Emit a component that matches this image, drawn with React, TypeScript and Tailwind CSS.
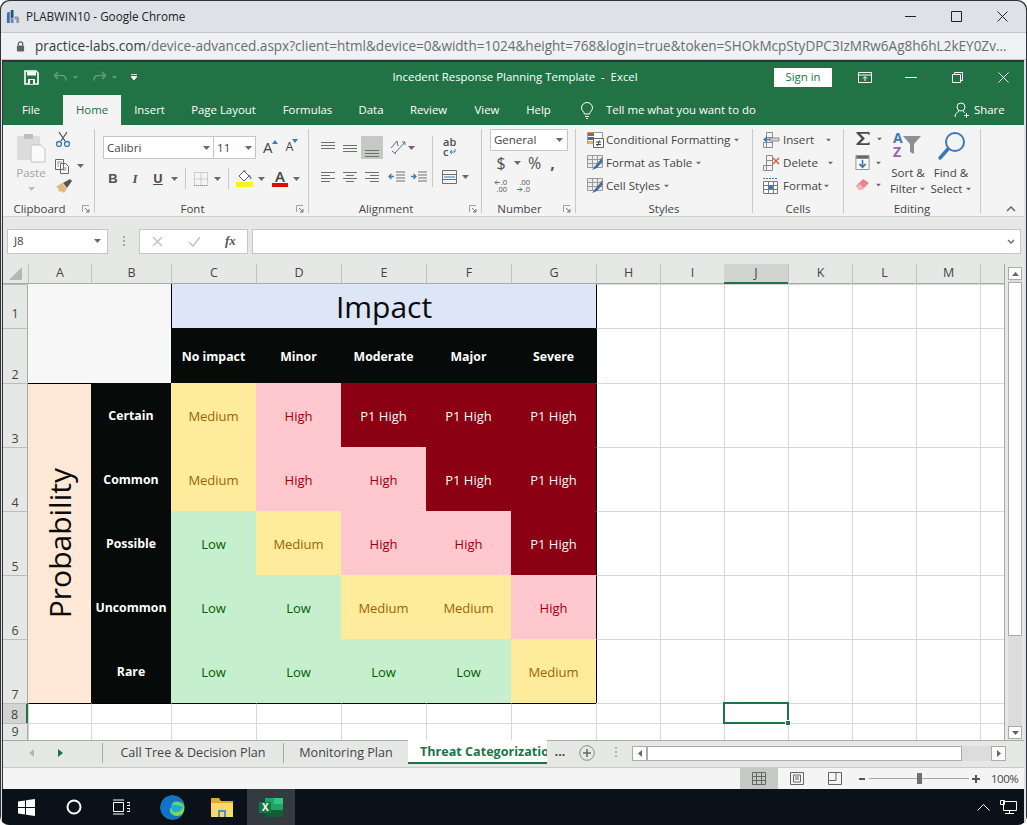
import type { ReactNode } from 'react';

const Caret = ({ className = '' }: { className?: string }) => (
  <svg width="7" height="4" viewBox="0 0 7 4" className={`shrink-0 ${className}`}>
    <path d="M0 0h7L3.5 4z" fill="#6a6a6a" />
  </svg>
);

const Lines = ({ rows, color = '#6f6f6f' }: { rows: number[][]; color?: string }) => (
  <svg width="16" height="14" viewBox="0 0 16 14" className="shrink-0">
    {rows.map(([a, b, y], i) => (
      <path key={i} d={`M${a} ${y + 0.5}H${b}`} stroke={color} />
    ))}
  </svg>
);

function Launcher() {
  return (
    <svg width="8" height="8" viewBox="0 0 8 8" className="absolute right-[4px] top-[4px]">
      <path d="M.5 7V.5H7" fill="none" stroke="#a0a0a0" />
      <path d="M3 3l4 4M7 4v3H4" fill="none" stroke="#707070" />
    </svg>
  );
}

function Group({
  label,
  launcher,
  className,
  children,
}: {
  label: string;
  launcher?: boolean;
  className: string;
  children: ReactNode;
}) {
  return (
    <div className={`flex h-[84px] flex-col border-r border-[#c9c9c9] ${className}`}>
      <div className="h-[72px] shrink-0">{children}</div>
      <div className={`relative flex h-[16px] shrink-0 items-center justify-center text-[11.5px] text-[#444] ${launcher ? 'pr-[18px]' : ''}`}>
        {label}
        {launcher && <Launcher />}
      </div>
    </div>
  );
}

function ChromeBar() {
  return (
    <>
      <div className="flex h-[31px] items-center rounded-t-[9px] bg-[#dee1e6] pl-[5px] pr-[18px] text-[11.7px] text-[#222]">
        <svg width="15" height="15" viewBox="0 0 16 16" className="shrink-0">
          <path d="M1 4l3-1v12H1z" fill="#3f6da8" />
          <path d="M5 1l3 0v8l-3 1z" fill="#24507f" />
          <path d="M9 8h4l1 2v5h-3v-4H9z" fill="#8b9ab0" />
          <path d="M5 10h3v5H5z" fill="#5d87bd" />
        </svg>
        <span className="ml-[5px]">PLABWIN10 - Google Chrome</span>
        <div className="ml-auto flex items-center gap-[35px]">
          <svg width="11" height="11" viewBox="0 0 11 11"><path d="M0 5.500h11" stroke="#222" /></svg>
          <svg width="11" height="11" viewBox="0 0 11 11"><path d="M.5.500h10v10H.5z" fill="none" stroke="#222" /></svg>
          <svg width="11" height="11" viewBox="0 0 11 11"><path d="M.5.500l10 10M10.500.500l-10 10" stroke="#222" /></svg>
        </div>
      </div>
      <div className="flex h-[28px] items-center border-y border-[#c4c6ca] bg-[#eff1f4] pl-[15px] text-[13.55px] whitespace-nowrap text-[#6a6d72]">
        <svg width="9" height="11" viewBox="0 0 10 12" className="shrink-0">
          <path d="M2.500 5V3.400a2.500 2.500 0 015 0V5" fill="none" stroke="#5f6368" strokeWidth="1.400" />
          <rect x="1" y="5" width="8" height="6.500" rx="1" fill="#5f6368" />
        </svg>
        <span className="ml-[10px]">
          <span className="text-[#3b3c3e]">practice-labs.com</span>
          /device-advanced.aspx?client=html&device=0&width=1024&height=768&login=true&token=SHOkMcpStyDPC3IzMRw6Ag8h6hL2kEY0Zv...
        </span>
      </div>
    </>
  );
}

const tabs = [
  { name: 'File', w: 'w-[56px] mr-[4px]' },
  { name: 'Home', w: 'w-[58px] h-[30px] bg-[#f4f4f4] text-[#1f6b41]' },
  { name: 'Insert', w: 'w-[57px]' },
  { name: 'Page Layout', w: 'w-[91px]' },
  { name: 'Formulas', w: 'w-[77px]' },
  { name: 'Data', w: 'w-[50px]' },
  { name: 'Review', w: 'w-[65px]' },
  { name: 'View', w: 'w-[52px]' },
  { name: 'Help', w: 'w-[51px]' },
];

function ExcelHeader() {
  return (
    <div className="h-[63px] bg-[#217346] text-[11.4px] text-white">
      <div className="flex h-[30px] items-center">
        <svg width="15" height="15" viewBox="0 0 15 15" className="ml-[21px] shrink-0">
          <path d="M1 1h11l2 2v11H1z" fill="none" stroke="#fff" strokeWidth="1.600" />
          <path d="M3 1.500h9v4H3zM4 9h7v5H4z" fill="#fff" />
          <path d="M6 10h3v4H6z" fill="#217346" />
        </svg>
        <svg width="15" height="13" viewBox="0 0 15 13" className="ml-[14px] shrink-0">
          <path d="M5 1L1.500 4.500 5 8M2 4.500h7a4 4 0 014 4v1" fill="none" stroke="#5f9c7b" strokeWidth="1.600" />
        </svg>
        <svg width="5" height="3" viewBox="0 0 5 3" className="ml-[5px]"><path d="M0 0h5L2.500 3z" fill="#5f9c7b" /></svg>
        <svg width="15" height="13" viewBox="0 0 15 13" className="ml-[14px] shrink-0">
          <path d="M10 1l3.500 3.500L10 8M13 4.500H6a4 4 0 00-4 4v1" fill="none" stroke="#5f9c7b" strokeWidth="1.600" />
        </svg>
        <svg width="5" height="3" viewBox="0 0 5 3" className="ml-[5px]"><path d="M0 0h5L2.500 3z" fill="#5f9c7b" /></svg>
        <svg width="6" height="6" viewBox="0 0 6 6" className="ml-[14px]"><path d="M0 .5h6M0 2.500h6L3 6z" stroke="#fff" strokeWidth=".8" fill="#fff" /></svg>
        <div className="ml-[254px] w-[248px] text-center text-[11.4px] whitespace-pre">Incedent Response Planning Template  -  Excel</div>
        <div className="ml-[135px] flex h-[19px] w-[58px] items-center justify-center bg-white text-[#217346]">Sign in</div>
        <svg width="14" height="11" viewBox="0 0 14 11" className="ml-[26px]">
          <path d="M.5.500h13v10H.5zM.5 3h13M7 9V5M5 6.500l2-2 2 2" fill="none" stroke="#fff" />
        </svg>
        <svg width="12" height="1" viewBox="0 0 12 1" className="ml-[33px]"><path d="M0 .5h12" stroke="#fff" /></svg>
        <svg width="11" height="11" viewBox="0 0 11 11" className="ml-[35px]">
          <path d="M.5 2.500h8v8h-8zM2.500 2.500v-2h8v8h-2" fill="none" stroke="#fff" />
        </svg>
        <svg width="11" height="11" viewBox="0 0 11 11" className="ml-[35px]">
          <path d="M.5.500l10 10M10.500.500l-10 10" stroke="#fff" />
        </svg>
      </div>
      <div className="flex h-[33px] items-end">
        {tabs.map((t) => (
          <div key={t.name} className={`flex h-[30px] shrink-0 items-center justify-center ${t.w}`}>
            {t.name}
          </div>
        ))}
        <div className="flex h-[30px] items-center">
          <svg width="14" height="17" viewBox="0 0 14 17" className="ml-[16px]">
            <path d="M4.500 12C4 9.500 1.500 8.500 1.500 6a5.500 5.500 0 0111 0c0 2.500-2.500 3.500-3 6zM5 14.500h4M6 16.500h2" fill="none" stroke="#fff" />
          </svg>
          <span className="ml-[12px] w-[152px] whitespace-nowrap">Tell me what you want to do</span>
          <svg width="15" height="16" viewBox="0 0 15 16" className="ml-[196px]">
            <circle cx="7" cy="5" r="4" fill="none" stroke="#fff" />
            <path d="M1 15c0-3 2-5 4-5.500M9 9.500c1 .3 1.500.7 2 1.300M10 13.500h5M12.500 11v5" fill="none" stroke="#fff" />
          </svg>
          <span className="ml-[5px]">Share</span>
        </div>
      </div>
    </div>
  );
}

function ClipboardGroup() {
  return (
    <Group label="Clipboard" launcher className="w-[92px]">
      <div className="flex">
        <div className="flex w-[50px] flex-col items-center pl-[6px] pt-[3px] text-[11.5px] text-[#a3a3a3]">
          <svg width="30" height="31" viewBox="0 0 30 31">
            <path d="M1 4h23v24H1z" fill="#dcdcdc" />
            <path d="M8 2h9v5H8z" fill="#bdbdbd" />
            <path d="M15 13h10l4 4v13H15z" fill="#fafafa" stroke="#c4c4c4" />
          </svg>
          <span className="mt-[2px] leading-[16px]">Paste</span>
          <Caret className="mt-[6px] opacity-40" />
        </div>
        <div className="flex flex-col pl-[2px] pt-[2px]">
          <div className="h-[24px]">
            <svg width="16" height="16" viewBox="0 0 16 16">
              <path d="M4 1l6 9M12 1L6 10" stroke="#555" strokeWidth="1.300" />
              <circle cx="4" cy="13" r="2.500" fill="none" stroke="#3e75ad" strokeWidth="1.300" />
              <circle cx="12" cy="13" r="2.500" fill="none" stroke="#3e75ad" strokeWidth="1.300" />
            </svg>
          </div>
          <div className="flex h-[22px] items-center gap-[6px]">
            <svg width="16" height="15" viewBox="0 0 16 15">
              <path d="M.5.500h8v10h-8zM5.500 4.500h5l3 3v7h-8z" fill="#fff" stroke="#666" />
              <path d="M2 3h5M2 5h2M2 7h2M7.500 9h4M7.500 11h4" stroke="#888" />
            </svg>
            <Caret />
          </div>
          <svg width="18" height="16" viewBox="0 0 18 16" className="mt-[1px]">
            <path d="M1 9l6-4 5 6-3 4-3-2-1 1-2-2 1-1z" fill="#e3b778" />
            <path d="M8 5l7-4 2 2-5 7z" fill="#555" />
          </svg>
        </div>
      </div>
    </Group>
  );
}

function FontGroup() {
  return (
    <Group label="Font" launcher className="w-[214px]">
      <div className="pl-[8px] pt-[7px] text-[11.6px] text-[#444]">
        <div className="flex h-[23px] items-center">
          <div className="flex h-[23px] w-[111px] items-center justify-between border border-[#c6c6c6] bg-white pl-[3px] pr-[3px]">
            Calibri <Caret />
          </div>
          <div className="-ml-px flex h-[23px] w-[43px] items-center justify-between border border-[#c6c6c6] bg-white pl-[3px] pr-[3px]">
            11 <Caret />
          </div>
          <span className="relative ml-[7px] text-[15px] leading-none">
            A
            <svg width="6" height="4" viewBox="0 0 6 4" className="absolute -right-[5px] top-0"><path d="M0 4h6L3 0z" fill="#3f79b4" /></svg>
          </span>
          <span className="relative ml-[13px] text-[12.5px] leading-none">
            A
            <svg width="6" height="4" viewBox="0 0 6 4" className="absolute -right-[5px] -top-[2px]"><path d="M0 0h6L3 4z" fill="#3f79b4" /></svg>
          </span>
        </div>
        <div className="mt-[11px] flex h-[17px] items-center text-[13px] text-[#505050]">
          <b className="w-[20px] text-center font-['Liberation_Sans',sans-serif] font-bold">B</b>
          <i className="w-[24px] text-center font-['Liberation_Serif',serif] font-bold">I</i>
          <u className="w-[22px] text-center font-bold">U</u>
          <Caret className="ml-[2px]" />
          <div className="ml-[7px] h-[21px] w-px bg-[#c9c9c9]" />
          <svg width="14" height="14" viewBox="0 0 14 14" className="ml-[8px]">
            <path d="M.5.500h13v13H.5zM7 .5v13M.5 7h13" fill="none" stroke="#a8a8a8" strokeDasharray="1 1" />
            <path d="M0 13.500h14" stroke="#8a8a8a" strokeDasharray="1 1" />
          </svg>
          <Caret className="ml-[6px]" />
          <div className="ml-[7px] h-[21px] w-px bg-[#c9c9c9]" />
          <svg width="17" height="17" viewBox="0 0 17 17" className="ml-[7px]">
            <path d="M8 1l5 5-5 5-5-5z" fill="#fff" stroke="#5c5c5c" />
            <path d="M7 1h3M13 5c1 2 2 3 2 4" fill="none" stroke="#3f79b4" strokeWidth="1.200" />
            <path d="M0 12h17v5H0z" fill="#f7f31c" />
          </svg>
          <Caret className="ml-[5px]" />
          <div className="ml-[7px] flex w-[16px] flex-col items-center">
            <span className="h-[13px] text-[15px] leading-[13px] font-semibold text-[#444]">A</span>
            <div className="h-[4px] w-[16px] bg-[#de0a0a]" />
          </div>
          <Caret className="ml-[5px]" />
        </div>
      </div>
    </Group>
  );
}

const alignRows = {
  top: [[1, 15, 1], [1, 15, 4], [1, 15, 7]],
  mid: [[1, 15, 4], [1, 15, 7], [1, 15, 10]],
  bot: [[1, 15, 7], [1, 15, 10], [1, 15, 13]],
  left: [[1, 15, 2], [1, 10, 5], [1, 15, 8], [1, 10, 11]],
  center: [[1, 15, 2], [4, 12, 5], [1, 15, 8], [4, 12, 11]],
  right: [[1, 15, 2], [6, 15, 5], [1, 15, 8], [6, 15, 11]],
};

function AlignmentGroup() {
  return (
    <Group label="Alignment" launcher className="w-[173px]">
      <div className="flex pl-[11px] pt-[7px]">
        <div className="flex w-[113px] flex-col border-r border-[#c9c9c9] pb-[2px]">
          <div className="flex h-[23px] items-center">
            <Lines rows={alignRows.top} />
            <div className="ml-[6px]"><Lines rows={alignRows.mid} /></div>
            <div className="ml-[3px] flex h-[23px] w-[22px] items-end justify-center bg-[#c6c8c6] pb-[2px]">
              <Lines rows={alignRows.bot} />
            </div>
            <svg width="17" height="17" viewBox="0 0 17 17" className="ml-[6px]">
              <path d="M2 9l6-7 1 5M3 12l4 3" fill="none" stroke="#666" />
              <path d="M6 14L16 3M13 3h3v3" fill="none" stroke="#3f79b4" />
            </svg>
            <Caret className="ml-[2px]" />
          </div>
          <div className="mt-[10px] flex h-[16px] items-center">
            <Lines rows={alignRows.left} />
            <div className="ml-[6px]"><Lines rows={alignRows.center} /></div>
            <div className="ml-[6px]"><Lines rows={alignRows.right} /></div>
            <svg width="17" height="14" viewBox="0 0 17 14" className="ml-[8px]">
              <path d="M8 2h9M8 5h9M8 8h9M8 11h9" stroke="#6f6f6f" />
              <path d="M6 6.500H1M3.500 4L1 6.500 3.500 9" fill="none" stroke="#3f79b4" strokeWidth="1.300" />
            </svg>
            <svg width="17" height="14" viewBox="0 0 17 14" className="ml-[5px]">
              <path d="M8 2h9M8 5h9M8 8h9M8 11h9" stroke="#6f6f6f" />
              <path d="M1 6.500h5M3.500 4L6 6.500 3.500 9" fill="none" stroke="#3f79b4" strokeWidth="1.300" />
            </svg>
          </div>
        </div>
        <div className="flex flex-col pl-[9px]">
          <div className="flex h-[23px] flex-col items-start pl-[1px] pt-[1px] text-[11px] font-semibold text-[#505050]">
            <span className="h-[10px] leading-[10px]">ab</span>
            <span className="flex h-[10px] items-center leading-[10px]">
              c
              <svg width="7" height="6" viewBox="0 0 7 6" className="ml-px">
                <path d="M6 0v3H1M3 1L1 3l2 2" fill="none" stroke="#3f79b4" />
              </svg>
            </span>
          </div>
          <div className="mt-[10px] flex h-[16px] items-center">
            <svg width="15" height="14" viewBox="0 0 15 14">
              <path d="M.5.500h14v13H.5zM.5 4.500h14M.5 9.500h14" fill="none" stroke="#6f6f6f" />
              <path d="M2 7h11" stroke="#3f79b4" />
            </svg>
            <Caret className="ml-[5px]" />
          </div>
        </div>
      </div>
    </Group>
  );
}

const ArrowLeft = () => (
  <svg width="6" height="5" viewBox="0 0 6 5" className="mr-px">
    <path d="M6 2.500H1M3 .5l-2 2 2 2" fill="none" stroke="#3f79b4" />
  </svg>
);

const ArrowRight = () => (
  <svg width="6" height="5" viewBox="0 0 6 5" className="mr-px">
    <path d="M0 2.500h5M3 .5l2 2-2 2" fill="none" stroke="#3f79b4" />
  </svg>
);

function NumberGroup() {
  return (
    <Group label="Number" launcher className="w-[94px]">
      <div className="pl-[8px] text-[#505050]">
        <div className="flex h-[22px] w-[78px] items-center justify-between border border-[#c6c6c6] bg-white pl-[3px] pr-[4px] text-[11.5px] text-[#444]">
          General <Caret />
        </div>
        <div className="mt-[2px] flex h-[20px] items-center text-[16px]">
          <span className="ml-[6px] w-[10px] text-center">$</span>
          <Caret className="ml-[8px]" />
          <span className="ml-[7px]">%</span>
          <span className="ml-[9px] font-bold">,</span>
        </div>
        <div className="mt-[5px] flex h-[15px] items-center text-[7.500px]">
          <div className="ml-[3px] flex w-[14px] flex-col items-end">
            <span className="flex h-[7px] items-center leading-[7px]"><ArrowLeft />.0</span>
            <span className="h-[7px] leading-[7px]">.00</span>
          </div>
          <div className="ml-[9px] flex w-[14px] flex-col items-end">
            <span className="h-[7px] leading-[7px]">.00</span>
            <span className="flex h-[7px] items-center leading-[7px]"><ArrowRight />.0</span>
          </div>
        </div>
      </div>
    </Group>
  );
}

const TableIcon = () => (
  <svg width="17" height="16" viewBox="0 0 17 16" className="shrink-0">
    <path d="M.5.500h15v12H.5zM.5 4.500h15M.5 8.500h15M5.500.5v12M10.500.5v12" fill="#ececec" stroke="#9a9a9a" />
    <path d="M5 15l3-4 6-7 2 2-6 7z" fill="#3f6da8" />
    <path d="M16 2l-3 2 2 2z" fill="#7a7a7a" />
  </svg>
);

function StylesGroup() {
  return (
    <Group label="Styles" className="w-[177px]">
      <div className="flex flex-col gap-[7px] pl-[11px] pt-[3px] text-[11.6px] leading-[16px] text-[#444]">
        <div className="flex items-center">
          <svg width="17" height="16" viewBox="0 0 17 16" className="shrink-0">
            <path d="M.5.500h15v11H.5z" fill="#fff" stroke="#9a9a9a" />
            <path d="M1 1h6v3H1z" fill="#b15a3c" />
            <path d="M1 5h6v3H1z" fill="#3f6da8" />
            <path d="M1 9h6v3H1z" fill="#e6b25a" />
            <path d="M6.500 6.500h10v9h-10z" fill="#fff" stroke="#666" />
            <path d="M9 10h5M9 12.500h5M12.500 8.500l-2 5.500" stroke="#444" />
          </svg>
          <span className="ml-[2px] whitespace-nowrap">Conditional Formatting</span>
          <Caret className="ml-[3px] scale-75" />
        </div>
        <div className="flex items-center">
          <TableIcon />
          <span className="ml-[2px] whitespace-nowrap">Format as Table</span>
          <Caret className="ml-[3px] scale-75" />
        </div>
        <div className="flex items-center">
          <TableIcon />
          <span className="ml-[2px] whitespace-nowrap">Cell Styles</span>
          <Caret className="ml-[3px] scale-75" />
        </div>
      </div>
    </Group>
  );
}

function CellsGroup() {
  const cellRow = (name: string, icon: ReactNode, caret: string) => (
    <div className="flex items-center">
      {icon}
      <span className="ml-[3px]">{name}</span>
      <Caret className={`scale-75 ${caret}`} />
    </div>
  );
  return (
    <Group label="Cells" className="w-[91px]">
      <div className="flex flex-col gap-[7px] pl-[10px] pt-[3px] text-[11.6px] leading-[16px] text-[#444]">
        {cellRow(
          'Insert',
          <svg width="17" height="16" viewBox="0 0 17 16" className="shrink-0">
            <path d="M3.500.500h6v15h-6zM.5 10.500h9M.5 10.500v5h3M3.500 5.500h6" fill="none" stroke="#8a8a8a" />
            <path d="M7 6h9v3H7z" fill="#d8d8d8" stroke="#8a8a8a" />
            <path d="M1 7.500h6M4 5L1 7.500 4 10" fill="none" stroke="#3f79b4" strokeWidth="1.400" />
          </svg>,
          'ml-[11px]',
        )}
        {cellRow(
          'Delete',
          <svg width="17" height="16" viewBox="0 0 17 16" className="shrink-0">
            <path d="M3.500.500h6v15h-6zM.5 10.500h9M.5 10.500v5h3M3.500 5.500h6" fill="none" stroke="#8a8a8a" />
            <path d="M10 3l6 6M16 3l-6 6" stroke="#d9603c" strokeWidth="1.500" />
          </svg>,
          'ml-[9px]',
        )}
        {cellRow(
          'Format',
          <svg width="17" height="16" viewBox="0 0 17 16" className="shrink-0">
            <path d="M.5 3.500h14v12H.5zM.5 7.500h14M.5 11.500h14M5.500 3.500v12M10.500 3.500v12" fill="#fff" stroke="#7a7a7a" />
            <path d="M5 7h5v4H5z" fill="#3f79b4" />
            <path d="M0 .5h15" stroke="#3f79b4" strokeDasharray="2 1" />
          </svg>,
          'ml-[1px]',
        )}
      </div>
    </Group>
  );
}

function EditingGroup() {
  return (
    <Group label="Editing" className="w-[137px]">
      <div className="flex pl-[11px] text-[11.6px] leading-[16px] text-[#444]">
        <div className="flex w-[35px] flex-col pt-[2px]">
          <div className="flex h-[15px] items-center gap-[5px]">
            <svg width="16" height="15" viewBox="0 0 16 16">
              <path d="M1 1h14v3.500L13 3H5l5 5-5 5h8l2-1.500V15H1v-1.500L6.500 8 1 2.500z" fill="#4a4a4a" />
            </svg>
            <Caret className="scale-75" />
          </div>
          <div className="mt-[9px] flex h-[15px] items-center gap-[5px]">
            <svg width="15" height="15" viewBox="0 0 15 16">
              <path d="M.5.500h14v15H.5z" fill="#fff" stroke="#8a8a8a" />
              <path d="M1 1h13v3H1z" fill="#666" />
              <path d="M7.500 5v8M4 9.500l3.500 3.500L11 9.500" fill="none" stroke="#3f79b4" strokeWidth="1.800" />
            </svg>
            <Caret className="scale-75" />
          </div>
          <div className="mt-[8px] flex h-[13px] items-center gap-[5px]">
            <svg width="15" height="13" viewBox="0 0 15 13">
              <path d="M1 8l7-7 6 4-7 7H4z" fill="#ef7f8a" />
              <path d="M1 8l3 4h3l2-2-4-4z" fill="#f3b4ba" />
            </svg>
            <Caret className="scale-75" />
          </div>
        </div>
        <div className="flex w-[36px] flex-col items-center pt-[2px]">
          <div className="flex h-[32px] w-[30px] items-start">
            <div className="flex flex-col text-[14px] leading-[14px] font-bold">
              <span className="text-[#3f79b4]">A</span>
              <span className="text-[#9a62b5]">Z</span>
            </div>
            <svg width="18" height="20" viewBox="0 0 18 20" className="mt-[5px]">
              <path d="M0 0h18l-7 8v10l-4-2V8z" fill="#8a8f96" />
            </svg>
          </div>
          <span className="mt-[2px] whitespace-nowrap">Sort &amp;</span>
          <div className="flex items-center whitespace-nowrap">Filter<Caret className="ml-[2px] scale-75" /></div>
        </div>
        <div className="flex w-[50px] flex-col items-center pt-[2px]">
          <svg width="28" height="32" viewBox="0 0 28 32">
            <circle cx="18" cy="11" r="9" fill="none" stroke="#3f79b4" strokeWidth="2" />
            <path d="M11 18L3 27" stroke="#3f79b4" strokeWidth="3.500" strokeLinecap="round" />
          </svg>
          <span className="mt-[2px] whitespace-nowrap">Find &amp;</span>
          <div className="flex items-center whitespace-nowrap">Select<Caret className="ml-[2px] scale-75" /></div>
        </div>
      </div>
    </Group>
  );
}

function Ribbon() {
  return (
    <div className="flex h-[92px] items-start border-b border-[#d0d0d0] bg-[#f4f4f4] pt-[4px]">
      <ClipboardGroup />
      <FontGroup />
      <AlignmentGroup />
      <NumberGroup />
      <StylesGroup />
      <CellsGroup />
      <EditingGroup />
      <svg width="10" height="6" viewBox="0 0 10 6" className="ml-[25px] mt-[77px]">
        <path d="M1 5l4-4 4 4" fill="none" stroke="#666" strokeWidth="1.500" />
      </svg>
    </div>
  );
}

function FormulaBar() {
  return (
    <div className="flex h-[47px] items-center bg-[#e6e8e6] pl-[4px] pr-[3px] pt-[1px]">
      <div className="flex h-[25px] w-[101px] items-center justify-between border border-[#c6c6c6] bg-white pl-[6px] pr-[6px] text-[11.6px] text-[#444]">
        J8 <Caret />
      </div>
      <div className="ml-[15px] flex flex-col gap-[2px]">
        <div className="h-[2px] w-[2px] bg-[#a8a8a8]" />
        <div className="h-[2px] w-[2px] bg-[#a8a8a8]" />
        <div className="h-[2px] w-[2px] bg-[#a8a8a8]" />
      </div>
      <div className="ml-[14px] flex h-[25px] w-[109px] items-center border border-[#c6c6c6] bg-white">
        <svg width="11" height="11" viewBox="0 0 11 11" className="ml-[12px]"><path d="M1 1l9 9M10 1l-9 9" stroke="#c4c4c4" strokeWidth="1.500" /></svg>
        <svg width="13" height="11" viewBox="0 0 13 11" className="ml-[25px]"><path d="M1 6l4 4 7-9" fill="none" stroke="#c4c4c4" strokeWidth="1.500" /></svg>
        <span className="ml-[24px] font-['Liberation_Serif',serif] text-[13px] font-bold italic text-[#555]">fx</span>
      </div>
      <div className="ml-[4px] flex h-[25px] flex-1 items-center justify-end border border-[#c6c6c6] bg-white pr-[5px]">
        <svg width="8" height="5" viewBox="0 0 8 5"><path d="M1 1l3 3 3-3" fill="none" stroke="#666" strokeWidth="1.300" /></svg>
      </div>
    </div>
  );
}

const colLetters = ['A', 'B', 'C', 'D', 'E', 'F', 'G', 'H', 'I', 'J', 'K', 'L', 'M', ''];

const M = 'flex items-center justify-center bg-[#ffeb9c] pt-[3px] text-[#9c6500]';
const H = 'flex items-center justify-center bg-[#ffc7ce] pt-[3px] text-[#9c0006]';
const P = 'flex items-center justify-center bg-[#8b0012] pt-[3px] text-[#f6f6f6]';
const L = 'flex items-center justify-center bg-[#c6efce] pt-[3px] text-[#006100]';

const matrix: { name: string; cells: [string, string][] }[] = [
  { name: 'Certain', cells: [['Medium', M], ['High', H], ['P1 High', P], ['P1 High', P], ['P1 High', P]] },
  { name: 'Common', cells: [['Medium', M], ['High', H], ['High', H], ['P1 High', P], ['P1 High', P]] },
  { name: 'Possible', cells: [['Low', L], ['Medium', M], ['High', H], ['High', H], ['P1 High', P]] },
  { name: 'Uncommon', cells: [['Low', L], ['Low', L], ['Medium', M], ['Medium', M], ['High', H]] },
  { name: 'Rare', cells: [['Low', L], ['Low', L], ['Low', L], ['Low', L], ['Medium', M]] },
];

const impact = ['No impact', 'Minor', 'Moderate', 'Major', 'Severe'];

const blank = 'border-l border-t border-[#d6d6d6] bg-white';

// the column right of the table gets the table's black right edge on its left side
const Blanks = ({ n, edge }: { n: number; edge?: boolean }) => (
  <>
    {Array.from({ length: n }, (_, i) => (
      <div key={i} className={edge && i === 0 ? 'border-l border-t border-l-black border-t-[#d6d6d6] bg-white' : blank} />
    ))}
  </>
);

const RowHead = ({ n, active, raised }: { n: number; active?: boolean; raised?: boolean }) => (
  <div
    className={`flex items-end justify-center border-t border-[#b9bdb9] text-[12.5px] leading-[16px] text-[#444] ${
      active ? 'border-r-2 border-r-[#217346] bg-[#d2d4d2]' : 'border-r border-r-[#a8aaa8] bg-[#e6e8e6]'
    } ${raised ? 'pb-[6px]' : ''}`}
  >
    {n}
  </div>
);

function Sheet() {
  return (
    <div className="grid w-[1001px] grid-cols-[25px_63px_80px_85px_85px_85px_85px_85px_64px_64px_64px_64px_64px_64px_24px] grid-rows-[20px_44px_55px_64px_64px_64px_64px_64px_20px_17px] overflow-hidden text-[13px]">
      <div className="flex items-center justify-center border-b border-[#a8aaa8] bg-[#e6e8e6]">
        <svg width="13" height="13" viewBox="0 0 13 13"><path d="M13 0v13H0z" fill="#b4b7b4" /></svg>
      </div>
      {colLetters.map((c, i) => (
        <div
          key={i}
          className={`flex items-center justify-center text-[12.5px] text-[#444] ${
            c === 'J'
              ? 'border-b-2 border-[#217346] bg-[#d2d4d2]'
              : 'border-l border-b border-l-[#bfc2bf] border-b-[#a8aaa8] bg-[#e6e8e6]'
          }`}
        >
          {c}
        </div>
      ))}

      <RowHead n={1} raised />
      <div className="col-span-2 row-span-2 bg-[#f7f7f7]" />
      <div className="col-span-5 flex items-center justify-center border-l border-black bg-[#dce6f7] text-[30px] text-[#0a0a0a]">
        Impact
      </div>
      <Blanks n={7} edge />

      <RowHead n={2} />
      {impact.map((t) => (
        <div key={t} className="flex items-center justify-center bg-[#060a08] pt-[3px] text-[12.3px] font-bold text-white">
          {t}
        </div>
      ))}
      <Blanks n={7} edge />

      {matrix.map((row, r) => (
        <div key={row.name} className="contents">
          <RowHead n={r + 3} />
          {r === 0 && (
            <div className="row-span-5 flex items-center justify-center border-t border-black bg-[#ffe9d6] text-[30px] text-[#0a0a0a]">
              <span className="rotate-180 [writing-mode:vertical-rl]">Probability</span>
            </div>
          )}
          <div className="flex items-center justify-center bg-[#060a08] pt-[3px] text-[12.3px] font-bold text-white">
            {row.name}
          </div>
          {row.cells.map(([t, c], i) => (
            <div key={i} className={c}>
              {t}
            </div>
          ))}
          <Blanks n={7} edge />
        </div>
      ))}

      <RowHead n={8} active />
      {Array.from({ length: 7 }, (_, i) => (
        <div key={i} className="border-l border-t border-l-[#d6d6d6] border-t-black bg-white" />
      ))}
      <Blanks n={2} />
      <div className={`relative ${blank}`}>
        <div className="absolute -top-[2px] -left-[2px] h-[22px] w-[66px] border-2 border-[#217346]" />
        <div className="absolute -right-[3px] -bottom-[3px] h-[6px] w-[6px] border border-white bg-[#217346]" />
      </div>
      <Blanks n={4} />

      <RowHead n={9} />
      <Blanks n={14} />
    </div>
  );
}

function VScroll() {
  return (
    <div className="flex h-[476px] w-[19px] flex-col border-l border-[#a8aaa8] pb-px pl-[3px] pr-px pt-[3px]">
      <div className="flex flex-1 flex-col bg-[#dcdcdc]">
        <div className="flex h-[13px] shrink-0 items-center justify-center border border-[#ababab] bg-white">
          <svg width="7" height="4" viewBox="0 0 7 4"><path d="M0 4h7L3.500 0z" fill="#666" /></svg>
        </div>
        <div className="mt-[2px] h-[354px] shrink-0 border border-[#ababab] bg-white" />
        <div className="mt-auto flex h-[13px] shrink-0 items-center justify-center border border-[#ababab] bg-white">
          <svg width="7" height="4" viewBox="0 0 7 4"><path d="M0 0h7L3.500 4z" fill="#666" /></svg>
        </div>
      </div>
    </div>
  );
}

function SheetTabs() {
  return (
    <div className="flex h-[27px] items-start border-t border-[#a8aaa8] bg-[#e6e8e6] text-[12.6px] text-[#444]">
      <div className="flex h-[23px] w-[99px] items-center pl-[26px]">
        <svg width="5" height="8" viewBox="0 0 5 8"><path d="M5 0v8L0 4z" fill="#b4b7b4" /></svg>
        <svg width="5" height="8" viewBox="0 0 5 8" className="ml-[24px]"><path d="M0 0v8l5-4z" fill="#217346" /></svg>
      </div>
      <div className="mt-[2px] flex h-[20px] w-[181px] items-center justify-center border-l border-[#a8aaa8] pt-[1px] whitespace-nowrap">
        Call Tree &amp; Decision Plan
      </div>
      <div className="mt-[2px] flex h-[20px] w-[125px] items-center justify-center border-l border-[#a8aaa8] pt-[1px]">
        Monitoring Plan
      </div>
      <div className="relative -mt-px flex h-[24px] w-[139px] items-center overflow-hidden border-b-2 border-[#217346] bg-white pl-[12px] pt-[3px] font-bold whitespace-nowrap text-[#217346]">
        Threat Categorization
      </div>
      <span className="ml-[6px] mt-[1px] w-[14px] text-center leading-[20px] font-bold">...</span>
      <svg width="16" height="16" viewBox="0 0 16 16" className="ml-[12px] mt-[4px]">
        <circle cx="8" cy="8" r="7.300" fill="none" stroke="#8a8a8a" />
        <path d="M8 4v8M4 8h8" stroke="#666" strokeWidth="1.500" />
      </svg>
      <div className="ml-[20px] mt-[6px] flex flex-col gap-[2px]">
        <div className="h-[2px] w-[2px] bg-[#b0b0b0]" />
        <div className="h-[2px] w-[2px] bg-[#b0b0b0]" />
        <div className="h-[2px] w-[2px] bg-[#b0b0b0]" />
      </div>
      <div className="ml-[15px] mt-[5px] flex h-[15px] w-[374px] items-stretch bg-[#dcdcdc]">
        <div className="flex w-[15px] items-center justify-center border border-[#ababab] bg-white">
          <svg width="4" height="7" viewBox="0 0 4 7"><path d="M4 0v7L0 3.500z" fill="#666" /></svg>
        </div>
        <div className="w-[315px] border border-[#ababab] bg-white" />
        <div className="ml-auto flex w-[15px] items-center justify-center border border-[#ababab] bg-white">
          <svg width="4" height="7" viewBox="0 0 4 7"><path d="M0 0v7l4-3.500z" fill="#666" /></svg>
        </div>
      </div>
    </div>
  );
}

function StatusBar() {
  return (
    <div className="flex h-[22px] items-center border-t border-[#c9c9c9] bg-[#f4f4f4] text-[11.5px] text-[#444]">
      <div className="ml-[737px] flex h-full w-[38px] items-center justify-center bg-[#c6c8c6]">
        <svg width="14" height="13" viewBox="0 0 14 13">
          <path d="M.5.500h13v12H.5zM.5 4.500h13M.5 8.500h13M4.500.5v12M9.500.5v12" fill="none" stroke="#666" />
        </svg>
      </div>
      <svg width="14" height="13" viewBox="0 0 14 13" className="ml-[12px]">
        <path d="M.5.500h13v12H.5z" fill="none" stroke="#666" />
        <path d="M3.500 3h7v7h-7zM5 5h4M5 7h4" fill="none" stroke="#666" />
      </svg>
      <svg width="14" height="13" viewBox="0 0 14 13" className="ml-[24px]">
        <path d="M.5.500h13v12H.5zM.5 8.500h7.500V.5" fill="none" stroke="#666" />
      </svg>
      <div className="ml-[17px] h-[2px] w-[6px] bg-[#555]" />
      <div className="ml-[4px] flex h-[10px] w-[100px] items-center">
        <div className="h-px w-[48px] bg-[#a8a8a8]" />
        <div className="h-[11px] w-[5px] bg-[#707070]" />
        <div className="h-px w-[47px] bg-[#a8a8a8]" />
      </div>
      <svg width="8" height="8" viewBox="0 0 8 8" className="ml-[3px]"><path d="M4 0v8M0 4h8" stroke="#555" strokeWidth="2" /></svg>
      <span className="ml-[11px] tracking-[-0.5px]">100%</span>
    </div>
  );
}

function Taskbar() {
  return (
    <div className="flex h-[36px] items-center bg-[#0a1118] pr-[7px]">
      <svg width="17" height="17" viewBox="0 0 17 17" className="ml-[16px]">
        <path d="M0 2.500l7-1v6.500H0zM8 1.300L17 0v8H8zM0 9h7v6.500l-7-1zM8 9h9v8l-9-1.300z" fill="#fff" />
      </svg>
      <svg width="16" height="16" viewBox="0 0 16 16" className="ml-[31px]">
        <circle cx="8" cy="8" r="6.500" fill="none" stroke="#fff" strokeWidth="2" />
      </svg>
      <svg width="17" height="16" viewBox="0 0 17 16" className="ml-[31px]">
        <path d="M.5 3.500h10v9H.5zM0 1h11M0 15h11M14 3.500h3v3h-3M14 9.500h3v3h-3" fill="none" stroke="#fff" />
      </svg>
      <svg width="25" height="25" viewBox="0 0 25 25" className="ml-[30px]">
        <defs>
          <linearGradient id="edgeA" x1="0" y1="0" x2="1" y2="1">
            <stop offset="0" stopColor="#3bc6a0" />
            <stop offset="1" stopColor="#8fdc4e" />
          </linearGradient>
        </defs>
        <circle cx="12.500" cy="12.500" r="12" fill="url(#edgeA)" />
        <path d="M12.500.5C5.500.5.500 6 .5 12.500c0 7 5.500 12 12 12 4 0 7.500-2 9.500-5-3 2-8 2-10.500-.5-2.500-2.500-2-6 .5-7.500-1-3 1.500-5 5-5 3 0 6 2 7 4.500C23 5 18.500.5 12.500.5z" fill="#1172c9" />
        <path d="M11 11c3-2 9-1 12 1-1 3-4 5-7 5-3 0-5-2-5-6z" fill="#14a7d8" opacity=".9" />
      </svg>
      <svg width="22" height="20" viewBox="0 0 22 20" className="ml-[26px]">
        <path d="M0 1h8l2 3h12v16H0z" fill="#e0a92e" />
        <path d="M0 6h22v14H0z" fill="#fbd86b" />
        <path d="M7 13h8v7H7z" fill="#4d8fc9" />
        <path d="M9 15h4v5H9z" fill="#f4d56b" />
      </svg>
      <div className="ml-[14px] flex h-[36px] w-[48px] items-center justify-center bg-[#333a40]">
        <div className="relative h-[19px] w-[24px]">
          <svg width="24" height="19" viewBox="0 0 24 19" className="absolute inset-0">
            <path d="M6 0h18v19H6z" fill="#21a366" />
            <path d="M15 0h9v6h-9z" fill="#33c481" />
            <path d="M15 6h9v6h-9z" fill="#21a366" />
            <path d="M6 12h18v7H6z" fill="#185c37" />
            <path d="M0 4h12v11H0z" fill="#107c41" />
          </svg>
          <span className="absolute top-[4px] left-[3px] text-[10px] leading-[11px] font-bold text-white">X</span>
        </div>
      </div>
      <svg width="13" height="7" viewBox="0 0 13 7" className="ml-auto">
        <path d="M.5 6.500l6-6 6 6" fill="none" stroke="#fff" />
      </svg>
      <svg width="17" height="14" viewBox="0 0 17 14" className="ml-[10px]">
        <path d="M3.500 1.500h13v9h-13zM9.500 10.500v3M5 13.500h9M.5.500h4v4h-4z" fill="#0a1118" stroke="#fff" />
      </svg>
    </div>
  );
}

export default function App() {
  return (
    <div className="h-[825px] w-[1027px] overflow-hidden rounded-[9px] bg-[#2f3337] pl-px pr-px pt-px font-['Open_Sans',sans-serif]">
      <ChromeBar />
      <div className="bg-[#dee1e6] pl-px pr-[2px]">
        <div className="border-t-2 border-l border-[#333] bg-white">
          <ExcelHeader />
          <Ribbon />
          <FormulaBar />
          <div className="flex bg-[#e6e8e6]">
            <Sheet />
            <VScroll />
          </div>
          <SheetTabs />
          <StatusBar />
        </div>
        <Taskbar />
      </div>
    </div>
  );
}
